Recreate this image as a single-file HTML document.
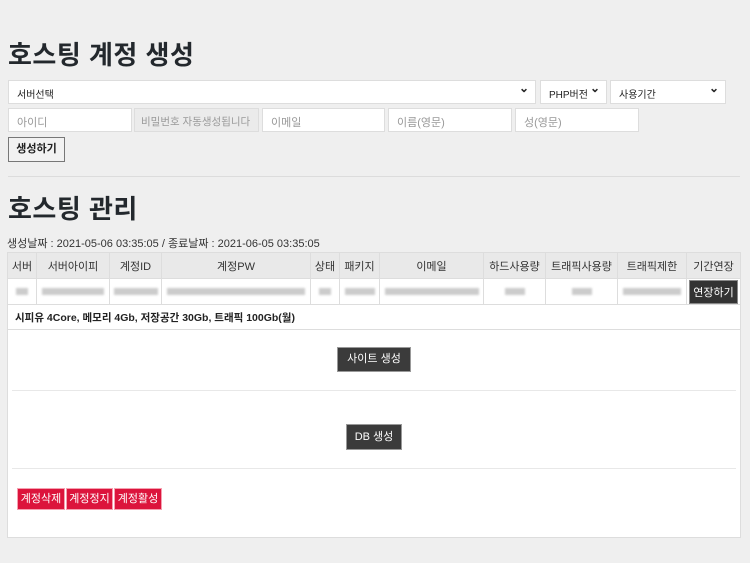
<!DOCTYPE html><html><head><meta charset="utf-8"><style>
*{box-sizing:border-box;margin:0;padding:0}
body{width:750px;height:563px;background:#efefef;font-family:"Liberation Sans","Noto Sans CJK KR",sans-serif;color:#222;position:relative;overflow:hidden}
.a{position:absolute}
h1{position:absolute;left:8px;font-size:26px;font-weight:bold;color:#23282d;letter-spacing:0.5px;white-space:nowrap}
.in{position:absolute;background:#fff;border:1px solid #ddd;font-size:11px;color:#999;padding:5px 8px;height:24px;white-space:nowrap;overflow:hidden}
.sel{color:#222;font-size:10px}
.sel:after{content:"⌄";position:absolute;right:6px;top:0px;font-size:12px;font-weight:bold}
table{border-collapse:collapse;font-size:11px}
td{border:1px solid #ddd;text-align:center;padding:0}
.blur{display:inline-block;height:7px;background:#ccc;filter:blur(1px)}
.dk{position:absolute;background:#3b3b3b;color:#fff;font-size:11px;text-align:center;border:1px solid #999}
.rd{position:absolute;background:#dc143c;color:#fff;font-size:11px;text-align:center;top:488px;height:22px;line-height:21px;border:1px solid #f5a0b0}
</style></head><body>
<h1 style="top:35px">호스팅 계정 생성</h1>
<div class="in sel" style="left:8px;top:80px;width:528px">서버선택</div>
<div class="in sel" style="left:540px;top:80px;width:67px">PHP버전</div>
<div class="in sel" style="left:610px;top:80px;width:116px">사용기간</div>
<div class="in" style="left:8px;top:108px;width:124px">아이디</div>
<div class="in" style="left:134px;top:108px;width:125px;background:#ebebeb;font-size:10.5px;padding:5px 6px">비밀번호 자동생성됩니다</div>
<div class="in" style="left:262px;top:108px;width:123px">이메일</div>
<div class="in" style="left:388px;top:108px;width:124px">이름(영문)</div>
<div class="in" style="left:515px;top:108px;width:124px">성(영문)</div>
<div class="a" style="left:8px;top:137px;width:57px;height:25px;border:1px solid #777;background:#f2f2f2;font-size:11px;font-weight:bold;text-align:center;line-height:23px">생성하기</div>
<div class="a" style="left:8px;top:176px;width:732px;height:1px;background:#dcdcdc"></div>
<h1 style="top:189px">호스팅 관리</h1>
<div class="a" style="left:7px;top:235px;font-size:11px;color:#333">생성날짜 : 2021-05-06 03:35:05 / 종료날짜 : 2021-06-05 03:35:05</div>
<div class="a" style="left:7px;top:252px;width:734px;height:286px;background:#fff;border:1px solid #ddd"></div>
<table class="a" style="left:7px;top:252px;width:734px">
<tr style="height:26px;background:#e9e9e9;color:#333"><td style="width:29px">서버</td><td style="width:73px">서버아이피</td><td style="width:52px">계정ID</td><td style="width:149px">계정PW</td><td style="width:29px">상태</td><td style="width:40px">패키지</td><td style="width:104px">이메일</td><td style="width:62px">하드사용량</td><td style="width:72px">트래픽사용량</td><td style="width:69px">트래픽제한</td><td>기간연장</td></tr>
<tr style="height:26px;background:#fff"><td><span class="blur" style="width:12px"></span></td><td><span class="blur" style="width:62px"></span></td><td><span class="blur" style="width:44px"></span></td><td><span class="blur" style="width:138px"></span></td><td><span class="blur" style="width:12px"></span></td><td><span class="blur" style="width:30px"></span></td><td><span class="blur" style="width:94px"></span></td><td><span class="blur" style="width:20px"></span></td><td><span class="blur" style="width:20px"></span></td><td><span class="blur" style="width:58px"></span></td><td><span style="display:inline-block;background:#333;color:#fff;padding:3px 3px;border:1px solid #888">연장하기</span></td></tr>
<tr style="height:25px;background:#fff"><td colspan="11" style="text-align:left;padding-left:7px;font-weight:bold;font-size:10.5px">시피유 4Core, 메모리 4Gb, 저장공간 30Gb, 트래픽 100Gb(월)</td></tr>
</table>
<div class="dk" style="left:337px;top:347px;width:74px;height:25px;line-height:23px">사이트 생성</div>
<div class="a" style="left:12px;top:390px;width:724px;height:1px;background:#e8e8e8"></div>
<div class="dk" style="left:346px;top:424px;width:56px;height:26px;line-height:24px">DB 생성</div>
<div class="a" style="left:12px;top:468px;width:724px;height:1px;background:#e8e8e8"></div>
<div class="rd" style="left:17px;width:48px">계정삭제</div>
<div class="rd" style="left:66px;width:47px">계정정지</div>
<div class="rd" style="left:114px;width:48px">계정활성</div>
</body></html>
